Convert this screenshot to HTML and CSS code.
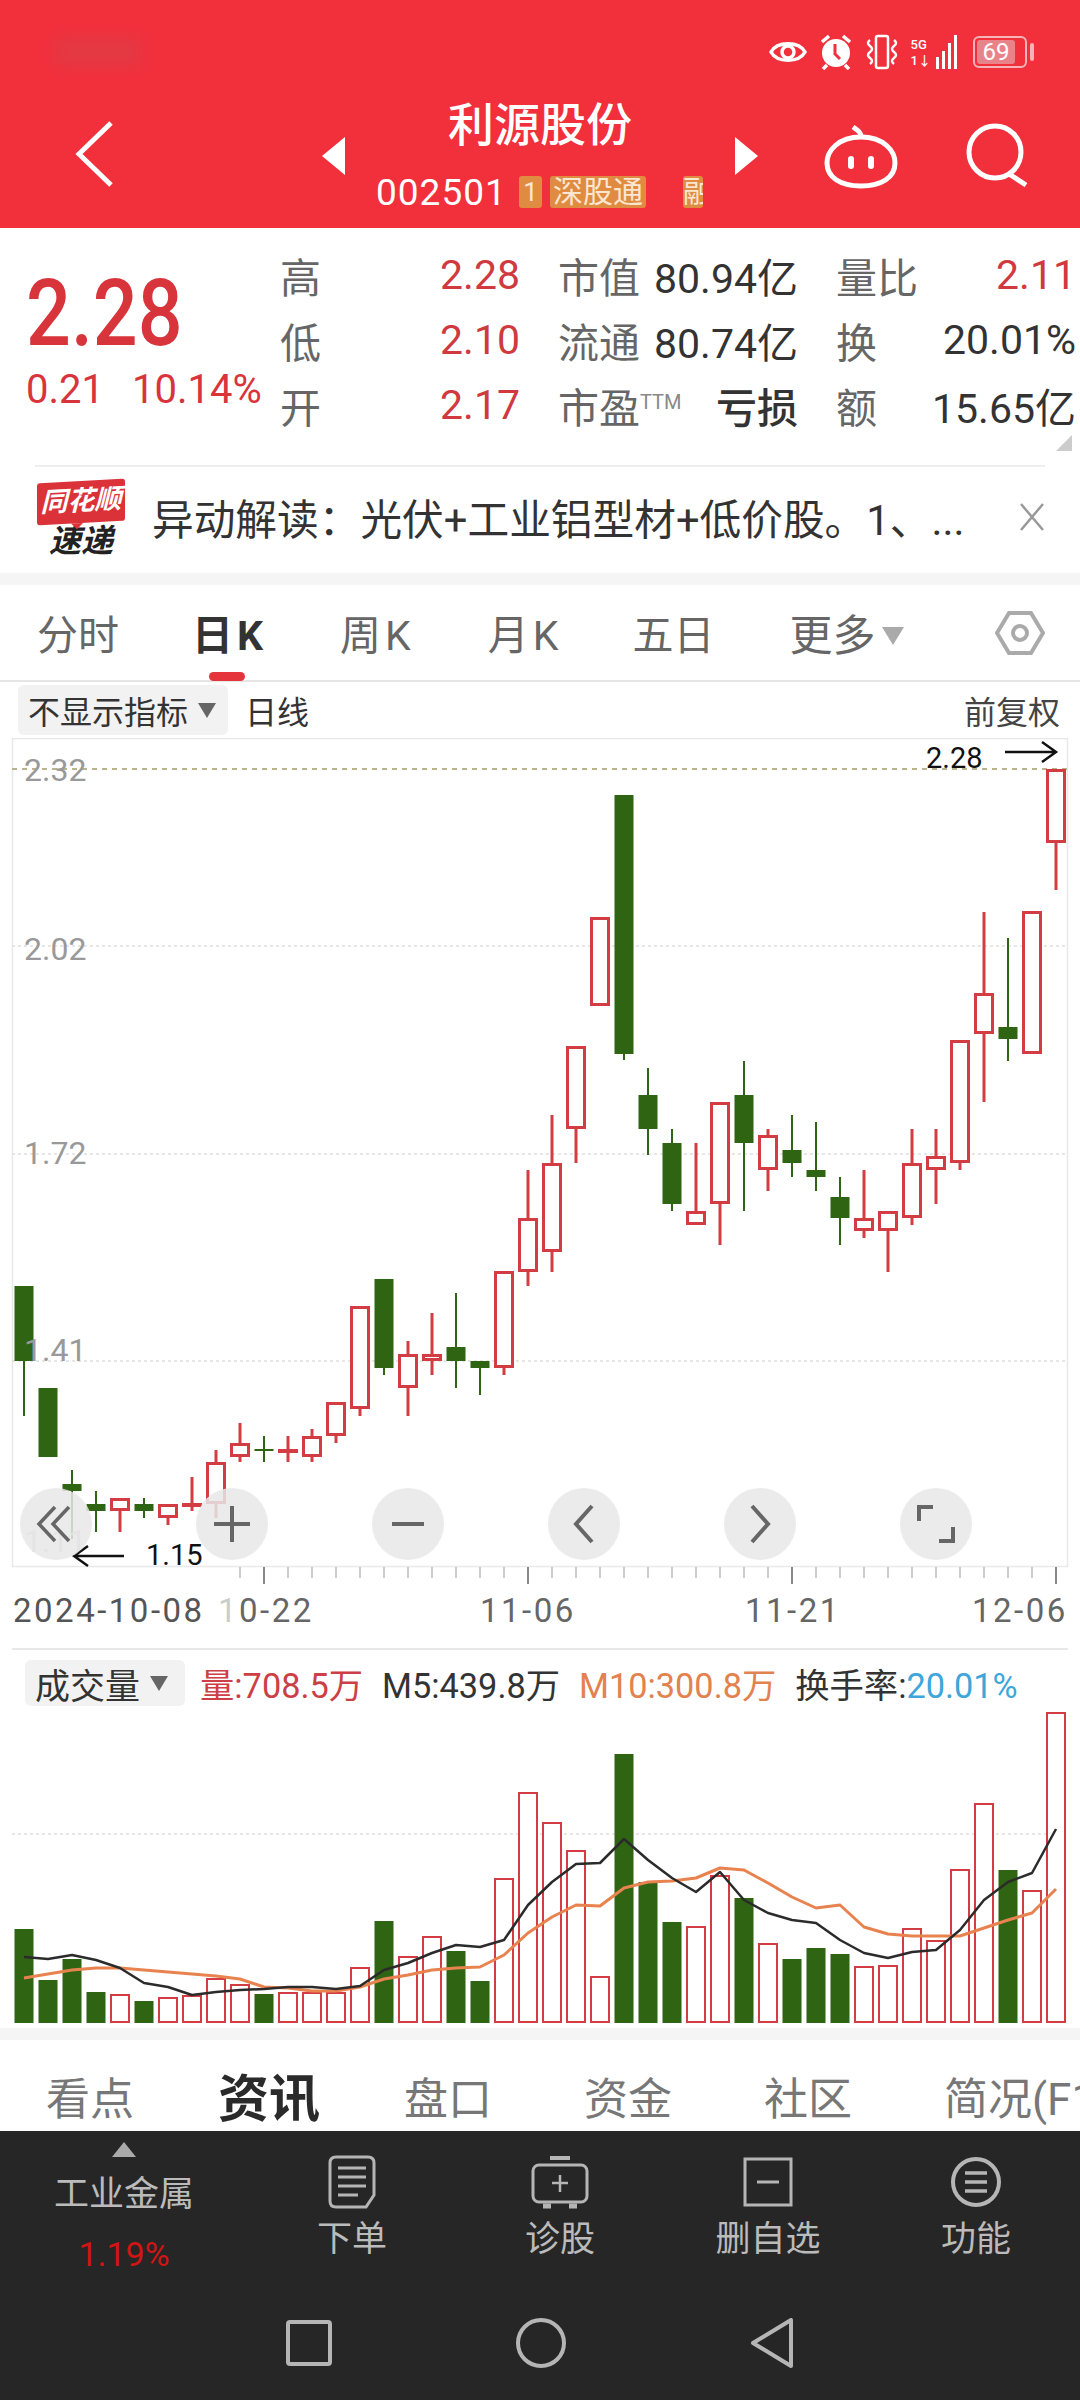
FILE: index.html
```html
<!DOCTYPE html>
<html lang="zh-CN">
<head>
    <meta charset="UTF-8">
    <meta name="viewport" content="width=device-width, initial-scale=1.0">
    <title>利源股份 002501</title>
    <link rel="stylesheet" href="styles.css">
</head>
<body>
    <div class="page">
        <header class="header">
            <div class="status">
                <div class="carrier"></div>
                <div class="status-icons">
                    <svg width="38" height="30" viewBox="0 0 38 30" fill="none" stroke="#fff" stroke-width="3.5"><path d="M2 15C8 4 30 4 36 15C30 26 8 26 2 15Z"/><circle cx="19" cy="15" r="6"/></svg>
                    <svg width="34" height="36" viewBox="0 0 34 36"><circle cx="17" cy="19" r="14" fill="#fff"/><path d="M3 8l7-6M31 8l-7-6M8 31l-4 4M26 31l4 4" stroke="#fff" stroke-width="3.5"/><path d="M16 10v10l5 5" stroke="#f2303d" stroke-width="3" fill="none"/></svg>
                    <svg width="34" height="36" viewBox="0 0 34 36" fill="none" stroke="#fff" stroke-width="2.5"><rect x="11" y="2" width="12" height="32" rx="2"/><path d="M5 6q-4 3 0 6t0 6t0 6t0 6M29 6q4 3 0 6t0 6t0 6t0 6"/></svg>
                    <div class="signal">
                        <span class="signal-text">5G<br>1↓</span>
                        <i class="s1"></i><i class="s2"></i><i class="s3"></i><i class="s4"></i>
                    </div>
                    <div class="battery"><span class="battery-level">69</span></div>
                    <i class="battery-tip"></i>
                </div>
            </div>
            <div class="nav">
                <div class="nav-left">
                    <svg width="40" height="68" viewBox="0 0 40 68" fill="none" stroke="#fff" stroke-width="5"><path d="M36 3L4 34L36 65"/></svg>
                </div>
                <div class="nav-center">
                    <i class="tri-left"></i>
                    <div class="stock">
                        <div class="stock-name">利源股份</div>
                        <div class="stock-code">
                            <span class="code">002501</span>
                            <span class="badge badge-one">1</span>
                            <span class="badge">深股通</span>
                            <span class="badge badge-cut">融</span>
                        </div>
                    </div>
                    <i class="tri-right"></i>
                </div>
                <div class="nav-right">
                    <svg width="74" height="66" viewBox="0 0 74 66" fill="none" stroke="#fff" stroke-width="5"><path d="M37 14C14 14 3 28 3 40C3 54 16 63 37 63C58 63 71 54 71 40C71 28 60 14 37 14Z"/><path d="M37 14C37 10 35 8 29 4"/><rect x="24" y="33" width="6" height="13" rx="3" fill="#fff" stroke="none"/><rect x="44" y="33" width="6" height="13" rx="3" fill="#fff" stroke="none"/></svg>
                    <svg width="64" height="64" viewBox="0 0 64 64" fill="none" stroke="#fff" stroke-width="5"><circle cx="29" cy="29" r="26"/><path d="M43 51L60 62"/></svg>
                </div>
            </div>
        </header>

        <section class="quote">
            <div class="price">
                <div class="price-now">2.28</div>
                <div class="price-diff"><span>0.21</span><span>10.14%</span></div>
            </div>
            <div class="stats">
                <div class="stat"><span class="stat-label">高</span><span class="up">2.28</span></div>
                <div class="stat"><span class="stat-label">市值</span><span>80.94亿</span></div>
                <div class="stat"><span class="stat-label">量比</span><span class="up">2.11</span></div>
                <div class="stat"><span class="stat-label">低</span><span class="up">2.10</span></div>
                <div class="stat"><span class="stat-label">流通</span><span>80.74亿</span></div>
                <div class="stat"><span class="stat-label">换</span><span>20.01%</span></div>
                <div class="stat"><span class="stat-label">开</span><span class="up">2.17</span></div>
                <div class="stat"><span class="stat-label">市盈<sup class="ttm">TTM</sup></span><span class="loss">亏损</span></div>
                <div class="stat"><span class="stat-label">额</span><span>15.65亿</span></div>
            </div>
            <i class="corner"></i>
        </section>

        <section class="news">
            <div class="news-logo">
                <div class="logo-top">同花顺</div>
                <div class="logo-bottom">速递</div>
            </div>
            <div class="news-text">异动解读：光伏+工业铝型材+低价股。1、...</div>
            <svg class="news-close" width="26" height="30" viewBox="0 0 26 30" fill="none" stroke="#999" stroke-width="2.5"><path d="M2 2L24 28M24 2L2 28"/></svg>
        </section>
        <div class="band"></div>

        <nav class="period-tabs">
            <span>分时</span>
            <span class="k active">日K</span>
            <span class="k">周K</span>
            <span class="k">月K</span>
            <span class="five">五日</span>
            <span class="more">更多<i class="tri-down"></i></span>
            <svg class="hex" width="50" height="46" viewBox="0 0 50 46" fill="none" stroke="#aaa" stroke-width="4"><path d="M14 3H36L48 23L36 43H14L2 23Z"/><circle cx="25" cy="23" r="7"/></svg>
        </nav>

        <div class="chart-bar">
            <div class="chip">不显示指标<i class="tri-chip"></i></div>
            <span class="chart-line-type">日线</span>
            <span class="chart-fq">前复权</span>
        </div>

        <section class="kline">
            <svg id="kline" class="kline-svg" width="1080" height="902" viewBox="0 738 1080 902"></svg>
            <div class="zoom-btns">
                <div class="zoom-btn"><svg width="40" height="40" viewBox="0 0 40 40" fill="none" stroke="#666" stroke-width="3.5"><path d="M19 3L3 20L19 37M33 3L17 20L33 37"/></svg></div>
                <div class="zoom-btn"><svg width="36" height="36" viewBox="0 0 36 36" fill="none" stroke="#666" stroke-width="4"><path d="M0 18H36M18 0V36"/></svg></div>
                <div class="zoom-btn"><svg width="36" height="36" viewBox="0 0 36 36" fill="none" stroke="#666" stroke-width="4"><path d="M2 18H34"/></svg></div>
                <div class="zoom-btn"><svg width="24" height="40" viewBox="0 0 24 40" fill="none" stroke="#666" stroke-width="4"><path d="M20 2L4 20L20 38"/></svg></div>
                <div class="zoom-btn"><svg width="24" height="40" viewBox="0 0 24 40" fill="none" stroke="#666" stroke-width="4"><path d="M4 2L20 20L4 38"/></svg></div>
                <div class="zoom-btn"><svg width="40" height="40" viewBox="0 0 40 40" fill="none" stroke="#666" stroke-width="4"><path d="M3 17V3H17M37 23V37H23"/></svg></div>
            </div>
        </section>

        <section class="volume">
            <div class="vol-head">
                <div class="chip vol-chip">成交量<i class="tri-chip"></i></div>
                <span class="vol-red">量:708.5万</span>
                <span class="vol-dark">M5:439.8万</span>
                <span class="vol-orange">M10:300.8万</span>
                <span class="vol-dark">换手率:<span class="vol-blue">20.01%</span></span>
            </div>
            <svg id="volume" class="vol-svg" width="1080" height="318" viewBox="0 1710 1080 318"></svg>
        </section>
        <div class="band"></div>

        <nav class="info-tabs">
            <span>看点</span>
            <span class="active">资讯</span>
            <span>盘口</span>
            <span>资金</span>
            <span>社区</span>
            <span>简况(F10)</span>
        </nav>

        <footer class="footer">
            <div class="actions">
                <div class="sector">
                    <i class="tri-up"></i>
                    <div class="sector-name">工业金属</div>
                    <div class="sector-pct">1.19%</div>
                </div>
                <div class="action">
                    <svg width="48" height="54" viewBox="0 0 48 54" fill="none" stroke="#b5b5b5" stroke-width="3"><path d="M8 2H40Q46 2 46 8V40L38 52H8Q2 52 2 46V8Q2 2 8 2Z"/><path d="M10 13H38M10 22H38M10 31H38M10 40H30"/></svg>
                    <span>下单</span>
                </div>
                <div class="action">
                    <svg width="58" height="54" viewBox="0 0 58 54" fill="none" stroke="#b5b5b5" stroke-width="3"><path d="M19 3H39" stroke-width="4"/><rect x="2" y="10" width="54" height="37" rx="6"/><path d="M29 20V37M21 28H37" stroke-width="2.5"/><path d="M12 51H20M38 51H46" stroke-width="5"/></svg>
                    <span>诊股</span>
                </div>
                <div class="action">
                    <svg width="50" height="50" viewBox="0 0 50 50" fill="none" stroke="#b5b5b5" stroke-width="3"><rect x="2" y="2" width="46" height="46"/><path d="M14 25H36"/></svg>
                    <span>删自选</span>
                </div>
                <div class="action">
                    <svg width="52" height="52" viewBox="0 0 52 52" fill="none" stroke="#b5b5b5" stroke-width="4"><circle cx="26" cy="26" r="23"/><path d="M15 17H37M15 26H37M15 35H37" stroke-width="3.5"/></svg>
                    <span>功能</span>
                </div>
            </div>
            <div class="sys-nav">
                <svg width="46" height="46" viewBox="0 0 46 46" fill="none" stroke="#b5b5b5" stroke-width="4"><rect x="2" y="2" width="42" height="42" rx="2"/></svg>
                <svg width="50" height="50" viewBox="0 0 50 50" fill="none" stroke="#b5b5b5" stroke-width="4"><circle cx="25" cy="25" r="23"/></svg>
                <svg width="44" height="50" viewBox="0 0 44 50" fill="none" stroke="#b5b5b5" stroke-width="4" stroke-linejoin="round"><path d="M41 2V48L3 25Z"/></svg>
            </div>
        </footer>
    </div>
    <script src="script.js"></script>
</body>
</html>
```

FILE: styles.css
```css
* {
    box-sizing: border-box;
}

body {
    margin: 0;
    background: #fff;
    font-family: Roboto, 'Noto Sans CJK SC', sans-serif;
    color: #333;
}

.page {
    width: 1080px;
    height: 2400px;
    overflow: hidden;
}

/* header */
.header {
    height: 228px;
    background: #f1303c;
    color: #fff;
}

.status {
    height: 95px;
    display: flex;
    justify-content: space-between;
    align-items: center;
    padding: 8px 46px 0 55px;
}

.carrier {
    width: 85px;
    height: 30px;
    background: #d9404a;
    opacity: 0.55;
    filter: blur(7px);
}

.status-icons {
    display: flex;
    align-items: center;
    gap: 12px;
}

.signal {
    display: flex;
    align-items: flex-end;
    gap: 3px;
    height: 34px;
}

.signal-text {
    font-size: 13px;
    line-height: 16px;
    font-weight: 500;
    margin-right: 2px;
}

.signal i {
    display: block;
    width: 3px;
    background: #fff;
}

.s1 { height: 12px; }
.s2 { height: 18px; }
.s3 { height: 26px; }
.s4 { height: 34px; }

.battery {
    width: 54px;
    height: 32px;
    border: 2px solid #f6b4b8;
    border-radius: 6px;
    padding: 2px;
    margin-left: 4px;
}

.battery-level {
    display: block;
    width: 38px;
    height: 24px;
    line-height: 24px;
    background: #e9838a;
    border-radius: 3px;
    text-align: center;
    font-size: 24px;
}

.battery-tip {
    width: 4px;
    height: 18px;
    margin-left: -9px;
    background: #f6b4b8;
    border-radius: 2px;
}

.nav {
    display: grid;
    grid-template-columns: 322px 436px 1fr;
    height: 133px;
}

.nav-left {
    padding: 25px 0 0 75px;
}

.nav-center {
    display: flex;
    justify-content: space-between;
    align-items: flex-start;
}

.stock {
    flex: 1;
}

.stock-name {
    font-size: 46px;
    line-height: 60px;
    text-align: center;
    font-weight: 500;
}

.stock-code {
    display: flex;
    align-items: center;
    height: 32px;
    margin-top: 21px;
    padding-left: 31px;
}

.code {
    font-size: 37px;
    letter-spacing: 1px;
    margin-right: 13px;
    width: 130px;
}

.badge {
    background: #e08b42;
    color: #fbe6d0;
    font-size: 30px;
    line-height: 32px;
    height: 32px;
    padding: 0 3px;
    border-radius: 3px;
    margin-right: 8px;
}

.badge-one {
    width: 23px;
    padding: 0;
    text-align: center;
    font-size: 26px;
}

.badge-cut {
    width: 20px;
    margin: 0 0 0 29px;
    padding: 0;
    overflow: hidden;
    white-space: nowrap;
}

.tri-left {
    width: 0;
    height: 0;
    margin-top: 42px;
    border-style: solid;
    border-width: 19px 23px 19px 0;
    border-color: transparent #fff transparent transparent;
}

.tri-right {
    width: 0;
    height: 0;
    margin-top: 42px;
    border-style: solid;
    border-width: 19px 0 19px 23px;
    border-color: transparent transparent transparent #fff;
}

.nav-right {
    display: flex;
    align-items: flex-start;
    gap: 68px;
    padding: 28px 0 0 66px;
}

/* quote */
.quote {
    position: relative;
    height: 237px;
    padding: 14px 2px 0 26px;
    display: flex;
}

.price {
    width: 254px;
    color: #d8343b;
}

.price-now {
    font-size: 84px;
    font-weight: 500;
    line-height: 100px;
    margin-top: 22px;
    transform: scale(0.94, 1.1);
    transform-origin: left center;
}

.price-diff {
    display: flex;
    gap: 28px;
    font-size: 40px;
    line-height: 50px;
    margin-top: 1px;
}

.stats {
    display: grid;
    grid-template-columns: 240px 240px 240px;
    grid-auto-rows: 65px;
    column-gap: 38px;
}

.stat {
    display: flex;
    justify-content: space-between;
    align-items: center;
    font-size: 41px;
    white-space: nowrap;
}

.stat-label {
    color: #666;
}

.up {
    color: #d03a3f;
}

.loss {
    font-weight: 500;
}

.ttm {
    font-size: 20px;
    color: #888;
    vertical-align: 14px;
    line-height: 0;
}

.corner {
    position: absolute;
    right: 8px;
    bottom: 14px;
    width: 0;
    height: 0;
    border-style: solid;
    border-width: 0 0 16px 16px;
    border-color: transparent transparent #ccc transparent;
}

/* news strip */
.news {
    height: 108px;
    margin: 0 35px;
    border-top: 2px solid #eee;
    display: flex;
    align-items: center;
    padding-bottom: 6px;
}

.news-logo {
    width: 88px;
    margin: 4px 27px 0 2px;
    text-align: center;
}

.logo-top {
    position: relative;
    height: 42px;
    line-height: 40px;
    background: #da3238;
    border-radius: 3px;
    color: #fff;
    font-size: 27px;
    font-weight: 700;
    font-style: italic;
    transform: skewY(-3deg);
}

.logo-top::after {
    content: "";
    position: absolute;
    left: 34px;
    top: 42px;
    border-style: solid;
    border-width: 6px 6px 0 6px;
    border-color: #da3238 transparent transparent transparent;
}

.logo-bottom {
    font-size: 32px;
    line-height: 32px;
    font-weight: 700;
    font-style: italic;
    color: #222;
    margin-top: 2px;
}

.news-text {
    flex: 1;
    font-size: 41.7px;
    color: #333;
    white-space: nowrap;
}

.band {
    height: 12px;
    background: #f5f5f5;
}

/* period tabs */
.period-tabs {
    position: relative;
    height: 97px;
    display: flex;
    align-items: flex-start;
    gap: 73px;
    padding: 24px 0 0 37px;
    border-bottom: 2px solid #e6e6e6;
    font-size: 41px;
    line-height: 54px;
    color: #666;
}

.period-tabs .k {
    letter-spacing: 4px;
}

.period-tabs .active {
    position: relative;
    font-weight: 700;
    color: #333;
}

.period-tabs .active::after {
    content: "";
    position: absolute;
    left: 17px;
    top: 63px;
    width: 36px;
    height: 9px;
    background: #e5343b;
    border-radius: 5px;
}

.five {
    margin-left: -3px;
}

.more {
    display: flex;
    align-items: center;
    margin-left: 2px;
    font-size: 43px;
}

.tri-down {
    margin-left: 6px;
    width: 0;
    height: 0;
    border-style: solid;
    border-width: 18px 11px 0 11px;
    border-color: #aaa transparent transparent transparent;
}

.hex {
    position: absolute;
    left: 995px;
    top: 25px;
}

.chart-bar {
    height: 56px;
    display: flex;
    align-items: center;
    padding: 0 20px 0 18px;
    font-size: 32px;
    color: #333;
}

.chip {
    display: flex;
    align-items: center;
    height: 50px;
    padding: 0 12px 0 10px;
    background: #f2f2f2;
    border-radius: 6px;
    white-space: nowrap;
}

.tri-chip {
    margin-left: 10px;
    width: 0;
    height: 0;
    border-style: solid;
    border-width: 15px 9px 0 9px;
    border-color: #666 transparent transparent transparent;
}

.chart-line-type {
    margin-left: 17px;
}

.chart-fq {
    margin-left: auto;
    color: #444;
}

/* k line */
.kline {
    position: relative;
    height: 902px;
}

.kline-svg, .vol-svg {
    display: block;
}

.kline-svg text, .vol-svg text {
    font-family: Roboto, sans-serif;
}

.zoom-btns {
    position: absolute;
    left: 20px;
    top: 750px;
    display: flex;
    gap: 104px;
}

.zoom-btn {
    width: 72px;
    height: 72px;
    border-radius: 50%;
    background: rgba(232, 232, 232, 0.85);
    display: flex;
    align-items: center;
    justify-content: center;
}

/* volume */
.volume {
    height: 380px;
    margin-top: 8px;
    padding-top: 12px;
    background: linear-gradient(#e8e8e8, #e8e8e8) 12px 0 / 1056px 2px no-repeat;
}

.vol-head {
    display: flex;
    align-items: center;
    height: 46px;
    padding-left: 25px;
    font-size: 34.3px;
    white-space: nowrap;
    margin-bottom: 4px;
}

.vol-chip {
    height: 46px;
    width: 160px;
    margin-right: 15px;
    font-size: 35px;
}

.vol-head > span {
    margin-right: 19px;
}

.vol-red { color: #cd3f46; }
.vol-dark { color: #333; }
.vol-orange { color: #e2824e; }
.vol-blue { color: #3ea6d9; }

/* info tabs */
.info-tabs {
    height: 91px;
    display: flex;
    align-items: flex-end;
    gap: 92px;
    padding: 0 0 4px 46px;
    font-size: 44px;
    line-height: 54px;
    color: #777;
    white-space: nowrap;
    overflow: hidden;
}

.info-tabs .active {
    font-size: 51px;
    font-weight: 700;
    color: #2a2a2a;
    margin: 0 -8px;
}

/* bottom */
.footer {
    height: 269px;
    background: #262626;
    color: #bbb;
}

.actions {
    display: grid;
    grid-template-columns: 248px 208px 208px 208px 208px;
    height: 180px;
    text-align: center;
}

.sector {
    display: flex;
    flex-direction: column;
    align-items: center;
    padding-top: 11px;
}

.tri-up {
    width: 0;
    height: 0;
    border-style: solid;
    border-width: 0 12px 15px 12px;
    border-color: transparent transparent #aaa transparent;
}

.sector-name {
    font-size: 35px;
    line-height: 46px;
    margin-top: 15px;
}

.sector-pct {
    font-size: 34px;
    line-height: 44px;
    margin-top: 14px;
    color: #d01515;
}

.action {
    display: flex;
    flex-direction: column;
    align-items: center;
    padding-top: 24px;
    font-size: 35px;
    height: 180px;
}

.action svg {
    height: 54px;
}

.action span {
    margin-top: 8px;
    line-height: 46px;
}

.sys-nav {
    display: flex;
    justify-content: center;
    align-items: center;
    gap: 184px;
    height: 50px;
    margin-top: 7px;
}
```

FILE: script.js
```js
// y values below are page pixels, candles are 24px apart
var RED = '#d23c42';
var GREEN = '#2f6413';
var NS = 'http://www.w3.org/2000/svg';

// [up?, high, top, bottom, low]
var candles = [
    [0, 1286, 1286, 1361, 1416], [0, 1388, 1388, 1457, 1457], [0, 1470, 1484, 1491, 1539],
    [0, 1491, 1504, 1511, 1532], [1, 1498, 1498, 1511, 1532], [0, 1498, 1504, 1511, 1518],
    [1, 1504, 1504, 1518, 1525], [1, 1477, 1503, 1505, 1511], [1, 1450, 1462, 1504, 1518],
    [1, 1423, 1443, 1457, 1462], [0, 1436, 1449, 1451, 1462], [1, 1436, 1449, 1451, 1462],
    [1, 1429, 1436, 1457, 1462], [1, 1402, 1402, 1436, 1443], [1, 1306, 1306, 1409, 1416],
    [0, 1279, 1279, 1368, 1375], [1, 1341, 1354, 1388, 1416], [1, 1313, 1354, 1361, 1375],
    [0, 1293, 1347, 1361, 1388], [0, 1361, 1361, 1368, 1395], [1, 1271, 1271, 1368, 1375],
    [1, 1170, 1218, 1272, 1286], [1, 1115, 1163, 1252, 1272], [1, 1046, 1046, 1129, 1163],
    [1, 917, 917, 1006, 1006], [0, 795, 795, 1054, 1060], [0, 1068, 1095, 1129, 1155],
    [0, 1129, 1143, 1204, 1211], [1, 1143, 1211, 1225, 1225], [1, 1102, 1102, 1204, 1245],
    [0, 1061, 1095, 1143, 1211], [1, 1129, 1135, 1170, 1191], [0, 1115, 1150, 1163, 1177],
    [0, 1122, 1170, 1177, 1191], [0, 1177, 1197, 1218, 1245], [1, 1170, 1218, 1231, 1238],
    [1, 1211, 1211, 1231, 1272], [1, 1129, 1163, 1218, 1225], [1, 1129, 1156, 1170, 1204],
    [1, 1040, 1040, 1163, 1170], [1, 912, 993, 1034, 1102], [0, 938, 1027, 1039, 1061],
    [1, 911, 911, 1054, 1054], [1, 769, 769, 843, 890]
];

var volTops = [289, 340, 319, 352, 354, 361, 357, 355, 338, 344, 354, 352, 352, 352, 327, 281, 316, 296, 311, 341, 238, 152,
    182, 210, 336, 114, 242, 282, 286, 235, 258, 303, 319, 308, 314, 326, 325, 288, 300, 229, 163, 230, 250, 72];
var m5 = [317, 319, 315, 320, 328, 343, 347, 355, 352, 350, 349, 347, 347, 349, 346, 330, 323, 313, 305, 307, 300, 265,
    242, 224, 223, 199, 220, 238, 252, 232, 260, 273, 280, 283, 300, 313, 318, 312, 310, 290, 260, 242, 233, 189];
var m10 = [338, 334, 330, 328, 328, 330, 332, 334, 336, 339, 347, 348, 351, 351, 347, 339, 335, 330, 328, 327, 315, 293,
    277, 265, 266, 248, 242, 241, 238, 228, 230, 243, 257, 268, 265, 287, 294, 296, 296, 296, 288, 280, 273, 249];

function el(parent, name, attrs, text) {
    var node = document.createElementNS(NS, name);
    for (var key in attrs) node.setAttribute(key, attrs[key]);
    if (text) node.textContent = text;
    parent.appendChild(node);
    return node;
}

function line(parent, x1, y1, x2, y2, color, width, dash) {
    var attrs = { x1: x1, y1: y1, x2: x2, y2: y2, stroke: color, 'stroke-width': width };
    if (dash) attrs['stroke-dasharray'] = dash;
    return el(parent, 'line', attrs);
}

function centerX(i) {
    return 24 + 24 * i;
}

function body(parent, x, top, bottom, up) {
    if (up) {
        el(parent, 'rect', { x: x - 8.5, y: top + 1.5, width: 17, height: Math.max(bottom - top - 3, 1), fill: '#fff', stroke: RED, 'stroke-width': 3 });
    } else {
        el(parent, 'rect', { x: x - 9.5, y: top, width: 19, height: bottom - top, fill: GREEN });
    }
}

function drawKline() {
    var svg = document.getElementById('kline');
    el(svg, 'rect', { x: 12.5, y: 738.5, width: 1055, height: 828, fill: 'none', stroke: '#e8e8e8', 'stroke-width': 1.5 });

    line(svg, 12, 769, 1068, 769, '#b9b48a', 2, '5 5');
    [946, 1154, 1361].forEach(function (y) {
        line(svg, 12, y, 1068, y, '#dedede', 1.5, '3 3');
    });

    candles.forEach(function (c, i) {
        var x = centerX(i);
        line(svg, x, c[1], x, c[4], c[0] ? RED : GREEN, c[0] ? 3 : 2);
        body(svg, x, c[2], c[3], c[0]);
    });

    var labels = [['2.32', 781, '#999'], ['2.02', 960, '#999'], ['1.72', 1164, '#999'], ['1.41', 1361, '#999'], ['1.11', 1552, '#ccc']];
    labels.forEach(function (l) {
        el(svg, 'text', { x: 24, y: l[1], 'font-size': 32, fill: l[2] }, l[0]);
    });

    // arrows with the price marks
    el(svg, 'text', { x: 926, y: 768, 'font-size': 29, fill: '#111' }, '2.28');
    el(svg, 'path', { d: 'M1005 752H1056M1042 742L1056 752L1042 762', fill: 'none', stroke: '#111', 'stroke-width': 2.5 });
    el(svg, 'text', { x: 146, y: 1565, 'font-size': 29, fill: '#111' }, '1.15');
    el(svg, 'path', { d: 'M124 1556H74M88 1546L74 1556L88 1566', fill: 'none', stroke: '#111', 'stroke-width': 2.5 });

    // time axis
    for (var i = 9; i < candles.length; i++) {
        var major = (i - 10) % 11 === 0;
        line(svg, centerX(i), 1567, centerX(i), major ? 1584 : 1578, major ? '#888' : '#bbb', major ? 2 : 1.5);
    }
    var dates = [['2024-10-08', 13, '#555'], ['11-06', 480, '#666'], ['11-21', 745, '#666'], ['12-06', 972, '#666']];
    dates.forEach(function (d) {
        el(svg, 'text', { x: d[1], y: 1622, 'font-size': 33, fill: d[2], 'letter-spacing': 2.5 }, d[0]);
    });
    // first digit of this one fades out under the long date
    var faded = el(svg, 'text', { x: 218, y: 1622, 'font-size': 33, fill: '#666', 'letter-spacing': 2.5 });
    el(faded, 'tspan', { fill: '#ccc' }, '1');
    el(faded, 'tspan', {}, '0-22');
}

function polyline(svg, values, color, width) {
    var points = values.map(function (v, i) {
        return centerX(i) + ',' + (1640 + v);
    }).join(' ');
    el(svg, 'polyline', { points: points, fill: 'none', stroke: color, 'stroke-width': width, 'stroke-linejoin': 'round' });
}

function drawVolume() {
    var svg = document.getElementById('volume');
    line(svg, 12, 1834, 1068, 1834, '#dedede', 1.5, '3 3');
    volTops.forEach(function (top, i) {
        var x = centerX(i);
        var y = 1640 + top;
        if (candles[i][0]) {
            el(svg, 'rect', { x: x - 9, y: y + 1, width: 18, height: 2022 - y - 1, fill: '#fff', stroke: RED, 'stroke-width': 2 });
        } else {
            el(svg, 'rect', { x: x - 9.5, y: y, width: 19, height: 2023 - y, fill: GREEN });
        }
    });
    polyline(svg, m10, '#e8834f', 3);
    polyline(svg, m5, '#2b2b2b', 2.5);
}

drawKline();
drawVolume();
```
